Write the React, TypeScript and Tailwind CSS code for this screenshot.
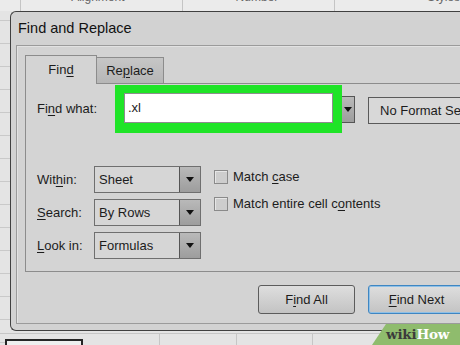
import React from "react";

const Tri = () => (
  <svg width="8" height="5" viewBox="0 0 8 5" className="block">
    <polygon points="0,0 8,0 4,5" fill="#111" />
  </svg>
);

const U = ({ children }: { children: React.ReactNode }) => (
  <span className="underline decoration-1 underline-offset-[2px]">{children}</span>
);

const Select = ({ value }: { value: string }) => (
  <div className="flex h-[27px] w-[107px] border border-[#6f6f6f] bg-[#d6d6d6]">
    <div className="flex flex-1 items-center pl-[4px] text-[13px]">{value}</div>
    <div className="flex w-[21px] items-center justify-center border-l border-[#555] bg-gradient-to-b from-[#b9b9b9] to-[#9d9d9d]">
      <Tri />
    </div>
  </div>
);

const Row = ({ label, value }: { label: React.ReactNode; value: string }) => (
  <div className="flex h-[27px] items-center">
    <div className="w-[57px] text-[13px]">{label}</div>
    <Select value={value} />
  </div>
);

const Check = ({ label }: { label: React.ReactNode }) => (
  <div className="flex h-[15px] items-center gap-[5px]">
    <div className="h-[14px] w-[14px] border border-[#8a8a8a] bg-[#cdcdcd] shadow-[inset_1px_1px_0_#e6e6e6]" />
    <div className="text-[13px]">{label}</div>
  </div>
);

export default function App() {
  const leftLines = Array.from({ length: 14 });
  return (
    <div className="relative h-[345px] w-[460px] overflow-hidden bg-[#e4e4e4] font-['Liberation_Sans',Arial,sans-serif] text-[#1c1c1c]">
      {/* ribbon strip */}
      <div className="flex h-[11px] overflow-hidden bg-[#ebebeb] text-[12px] leading-[14px] text-[#666]">
        <div className="h-full w-[22px] border-r border-[#c4c4c4]" />
        <div className="relative flex h-full w-[168px] border-r border-[#c4c4c4]">
          <span className="ml-[50px] mt-[-10px]">Alignment</span>
        </div>
        <div className="flex h-full w-[159px] border-r border-[#c4c4c4]">
          <span className="ml-[53px] mt-[-10px]">Number</span>
        </div>
        <div className="flex h-full flex-1">
          <span className="ml-[92px] mt-[-10px]">Styles</span>
        </div>
      </div>

      <div className="flex h-[320px]">
        {/* left grid strip */}
        <div className="flex w-[10px] shrink-0 flex-col">
          <div className="h-[10px] shrink-0 border-b border-[#c9c9c9]" />
          {leftLines.map((_, i) => (
            <div key={i} className="h-[23px] shrink-0 border-b border-[#c9c9c9]" />
          ))}
        </div>

        {/* dialog */}
        <div className="flex w-[470px] shrink-0 flex-col rounded-l-[6px] border border-r-0 border-[#404040] bg-[#d2d2d2]">
          <div className="flex h-[33px] shrink-0 items-center pl-[7px] pt-[1px] text-[14.5px] text-[#111]">
            Find and Replace
          </div>
          <div className="mb-[6px] ml-[5px] flex flex-1 flex-col border border-r-0 border-[#9b9b9b] bg-[#d3d3d3] pl-[8px] pt-[9px] shadow-[inset_1px_1px_0_#e2e2e2]">
            {/* tabs */}
            <div className="relative z-10 -mb-px flex items-end">
              <div className="flex h-[29px] w-[72px] items-center justify-center border border-b-0 border-[#8c8c8c] bg-[#d4d4d4] text-[13px]">
                Fin<U>d</U>
              </div>
              <div className="mb-px flex h-[26px] w-[67px] items-center justify-center border border-b-0 border-l-0 border-[#8c8c8c] bg-gradient-to-b from-[#c6c6c6] to-[#b6b6b6] text-[13px]">
                Re<U>p</U>lace
              </div>
            </div>
            {/* panel */}
            <div className="flex h-[189px] shrink-0 flex-col border border-r-0 border-[#8c8c8c] bg-[#d4d4d4] pl-[11px] pt-[1px]">
              <div className="flex items-center">
                <div className="w-[78px] text-[13px]">
                  Fi<U>n</U>d what:
                </div>
                <div className="h-[48px] w-[227px] border-[9px] border-b-[10px] border-t-[8px] border-[#1fe427] bg-white">
                  <div className="flex h-full items-center border border-[#8d8d8d] pl-[3px] text-[13px]">
                    .xl
                  </div>
                </div>
                <div className="flex h-[27px] w-[13px] items-center border border-l-0 border-[#555] bg-gradient-to-b from-[#b9b9b9] to-[#9d9d9d] pl-[2px]">
                  <Tri />
                </div>
                <div className="ml-[13px] mt-[3px] flex h-[27px] w-[110px] shrink-0 items-center whitespace-nowrap border border-[#5a5a5a] bg-[#d8d8d8] pl-[11px] text-[13px]">
                  No Format Set
                </div>
              </div>

              <div className="mt-[33px] flex">
                <div className="flex flex-col gap-[6px]">
                  <Row label={<>Wit<U>h</U>in:</>} value="Sheet" />
                  <Row label={<><U>S</U>earch:</>} value="By Rows" />
                  <Row label={<><U>L</U>ook in:</>} value="Formulas" />
                </div>
                <div className="ml-[13px] flex flex-col gap-[12px] pt-[3px]">
                  <Check label={<>Match <U>c</U>ase</>} />
                  <Check label={<>Match entire cell c<U>o</U>ntents</>} />
                </div>
              </div>
            </div>

            {/* buttons */}
            <div className="mt-[13px] flex gap-[13px] pl-[233px]">
              <div className="flex h-[29px] w-[97px] items-center justify-center rounded-[3px] border border-[#5c5c5c] bg-gradient-to-b from-[#dedede] to-[#c3c3c3] text-[13px]">
                F<U>i</U>nd All
              </div>
              <div className="flex h-[29px] w-[97px] items-center justify-center rounded-[3px] border border-[#3f86c2] bg-gradient-to-b from-[#dedede] to-[#c3c3c3] text-[13px] shadow-[inset_0_0_0_1px_#8fc0e6]">
                <U>F</U>ind Next
              </div>
            </div>
          </div>
        </div>
      </div>

      {/* bottom grid strip */}
      <div className="flex h-[14px] flex-col">
        <div className="mt-[2px] flex flex-1 border-t border-[#c6c6c6]">
          <div className="w-[5px]" />
          <div className="mt-[5px] h-[20px] w-[78px] border-2 border-[#262626] bg-[#efefef]" />
          <div className="w-[77px] border-r border-[#c6c6c6]" />
          <div className="w-[77px] border-r border-[#c6c6c6]" />
          <div className="w-[76px] border-r border-[#c6c6c6]" />
          <div className="w-[77px] border-r border-[#c6c6c6]" />
        </div>
      </div>

      {/* wikiHow watermark */}
      <div className="absolute bottom-0 right-0 flex h-[21px] w-[88px] items-center bg-[#8fbc6d] pl-[14px] [clip-path:polygon(14px_0,100%_0,100%_100%,0_100%)]">
        <span className="font-['DejaVu_Serif',serif] text-[13.5px] font-bold leading-none tracking-[-0.2px]">
          <span className="text-[#3b3b3b]">wiki</span>
          <span className="text-white">How</span>
        </span>
      </div>
    </div>
  );
}
